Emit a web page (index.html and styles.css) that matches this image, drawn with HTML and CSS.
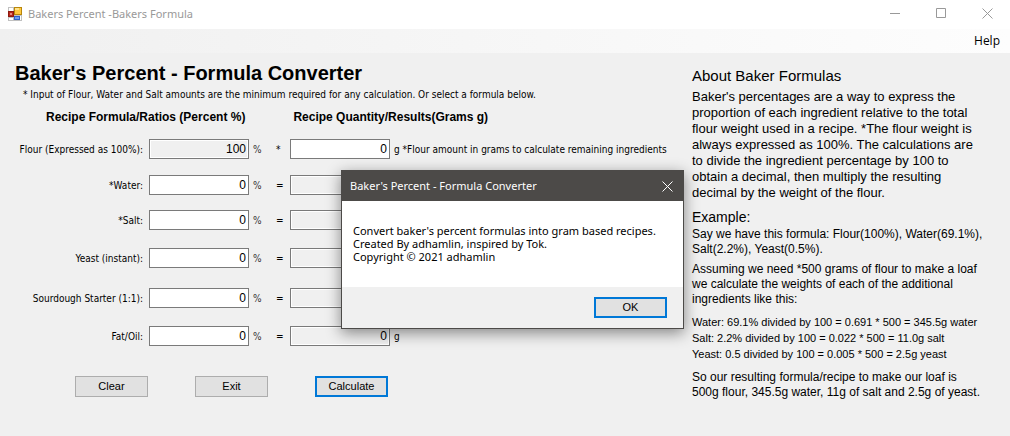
FILE: index.html
```html
<!DOCTYPE html>
<html lang="en">
<head>
<meta charset="utf-8">
<title>Bakers Percent -Bakers Formula</title>
<link rel="stylesheet" href="styles.css">
</head>
<body>
<header class="titlebar">
  <svg class="app-icon" width="14" height="14" viewBox="0 0 14 14" aria-hidden="true">
    <path d="M0 0h14v14H0z" fill="#c0c0c0"/>
    <path d="M1 1h4v3H1zM1 11h4v2H1zM12 9h1v4h-1z" fill="#fff"/>
    <path d="M6 0h8v8H6z" fill="#b8860b"/>
    <path d="M7 1h6v6H7z" fill="#ffc83c"/>
    <path d="M7 1h4v2H7z" fill="#ffe38a"/>
    <path d="M0 4h6v6H0z" fill="#8e1a10"/>
    <path d="M1 5h4v4H1z" fill="#b8291b"/>
    <path d="M2 6h2v2H2z" fill="#e88a80"/>
    <path d="M6 9h6v4H6z" fill="#2f62c8"/>
    <path d="M7 10h4v2H7z" fill="#6f9cf0"/>
  </svg>
  <span class="titlebar-text">Bakers Percent -Bakers Formula</span>
  <div class="window-buttons">
    <button type="button" aria-label="Minimize"><svg width="11" height="11" viewBox="0 0 11 11"><path d="M0 5.500h10" /></svg></button>
    <button type="button" aria-label="Maximize"><svg width="11" height="11" viewBox="0 0 11 11"><path d="M.5.5h9v9h-9z" /></svg></button>
    <button type="button" aria-label="Close"><svg width="11" height="11" viewBox="0 0 11 11"><path d="M.5.5l10 10M10.500.5l-10 10" /></svg></button>
  </div>
</header>
<nav class="menu"><button type="button">Help</button></nav>
<main class="content">
  <form class="converter">
    <h1>Baker's Percent - Formula Converter</h1>
    <p class="note">* Input of Flour, Water and Salt amounts are the minimum required for any calculation. Or select a formula below.</p>
    <div class="column-heads">
      <h2>Recipe Formula/Ratios (Percent %)</h2>
      <h2>Recipe Quantity/Results(Grams g)</h2>
    </div>
    <div class="rows">
      <label for="flour">Flour (Expressed as 100%):</label>
      <input id="flour" value="100" readonly>
      <span class="units"><span>%</span><span class="op">*</span></span>
      <input id="flour-g" value="0" aria-label="Flour grams">
      <span class="grams">g *Flour amount in grams to calculate remaining ingredients</span>

      <label for="water">*Water:</label>
      <input id="water" value="0">
      <span class="units"><span>%</span><span class="op">=</span></span>
      <input id="water-g" aria-label="Water grams" readonly>
      <span class="grams"></span>

      <label for="salt">*Salt:</label>
      <input id="salt" value="0">
      <span class="units"><span>%</span><span class="op">=</span></span>
      <input id="salt-g" aria-label="Salt grams" readonly>
      <span class="grams"></span>

      <label for="yeast">Yeast (instant):</label>
      <input id="yeast" value="0">
      <span class="units"><span>%</span><span class="op">=</span></span>
      <input id="yeast-g" aria-label="Yeast grams" readonly>
      <span class="grams"></span>

      <label for="starter">Sourdough Starter (1:1):</label>
      <input id="starter" value="0">
      <span class="units"><span>%</span><span class="op">=</span></span>
      <input id="starter-g" aria-label="Sourdough starter grams" readonly>
      <span class="grams"></span>

      <label for="fat">Fat/Oil:</label>
      <input id="fat" value="0">
      <span class="units"><span>%</span><span class="op">=</span></span>
      <input id="fat-g" value="0" aria-label="Fat or oil grams" readonly>
      <span class="grams">g</span>
    </div>
    <div class="actions">
      <button class="push" type="button">Clear</button>
      <button class="push" type="button">Exit</button>
      <button class="push push-default" type="button">Calculate</button>
    </div>
  </form>
  <aside class="about">
    <h2>About Baker Formulas</h2>
    <p class="intro">Baker's percentages are a way to express the<br>proportion of each ingredient relative to the total<br>flour weight used in a recipe. *The flour weight is<br>always expressed as 100%. The calculations are<br>to divide the ingredient percentage by 100 to<br>obtain a decimal, then multiply the resulting<br>decimal by the weight of the flour.</p>
    <h3>Example:</h3>
    <p>Say we have this formula: Flour(100%), Water(69.1%),<br>Salt(2.2%), Yeast(0.5%).</p>
    <p>Assuming we need *500 grams of flour to make a loaf<br>we calculate the weights of each of the additional<br>ingredients like this:</p>
    <p class="sums">Water: 69.1% divided by 100 = 0.691 * 500 = 345.5g water<br>Salt: 2.2% divided by 100 = 0.022 * 500 = 11.0g salt<br>Yeast: 0.5 divided by 100 = 0.005 * 500 = 2.5g yeast</p>
    <p>So our resulting formula/recipe to make our loaf is<br>500g flour, 345.5g water, 11g of salt and 2.5g of yeast.</p>
  </aside>
</main>
<section class="dialog" role="dialog" aria-labelledby="dialog-title">
  <header class="dialog-title">
    <span id="dialog-title">Baker's Percent - Formula Converter</span>
    <button type="button" aria-label="Close"><svg width="11" height="11" viewBox="0 0 11 11"><path d="M.5.5l10 10M10.500.5l-10 10" /></svg></button>
  </header>
  <p class="dialog-text">Convert baker's percent formulas into gram based recipes.<br>Created By adhamlin, inspired by Tok.<br>Copyright © 2021 adhamlin</p>
  <footer class="dialog-footer"><button class="push push-default" type="button">OK</button></footer>
</section>
</body>
</html>
```
FILE: styles.css
```css
* { box-sizing: border-box; }

body {
  margin: 0;
  min-height: 100vh;
  background: #f0f0f0;
  color: #000;
  font: 10px/20px "DejaVu Sans Condensed", "Liberation Sans", sans-serif;
}

h1, h2, h3, p { margin: 0; }

button, input { font: inherit; color: inherit; }

button svg { display: block; fill: none; stroke: currentColor; }

/* Window chrome */
.titlebar {
  display: flex;
  align-items: center;
  height: 29px;
  padding: 0 0 2px 8px;
  background: #fff;
  color: #999;
  font: 11px/27px "Noto Sans", "Segoe UI", sans-serif;
}

.app-icon { margin-right: 6px; }

.window-buttons {
  display: flex;
  margin-left: auto;
}

.window-buttons button {
  display: grid;
  place-items: center;
  width: 46px;
  height: 27px;
  padding: 0;
  border: 0;
  background: none;
}

.menu {
  display: flex;
  justify-content: flex-end;
  height: 24px;
  padding: 0 6px;
  background: linear-gradient(to right, #f0f0f0, #fdfdfd);
}

.menu button {
  padding: 0 4px;
  border: 0;
  background: none;
  font: 12px/24px "Open Sans", "Segoe UI", sans-serif;
}

/* Form */
.content {
  display: flex;
  align-items: flex-start;
}

.converter {
  flex: 1;
  min-width: 0;
  padding: 8px 0 0 15px;
  white-space: nowrap;
}

.converter h1 {
  font: bold 20px/24px "Liberation Sans", Arial, sans-serif;
}

.note {
  padding-left: 8px;
  line-height: 20px;
}

.column-heads {
  display: flex;
  gap: 48px;
  padding-left: 31px;
}

.column-heads h2 {
  font: bold 12px/24px "Liberation Sans", Arial, sans-serif;
}

.rows {
  display: grid;
  grid-template-columns: 134px 100px 41px 100px 1fr;
  grid-template-rows: 36px 35px 38px 40px 38px 20px;
  align-items: start;
  padding-top: 10px;
}

.rows label {
  padding: 1px 6px 0 0;
  text-align: right;
}

.rows input {
  width: 100%;
  height: 20px;
  padding: 0 2px;
  border: 1px solid #7a7a7a;
  background: #fff;
  font: 12px "Liberation Sans", Arial, sans-serif;
  text-align: right;
  outline: 0;
}

.rows input[readonly] {
  background: #f0f0f0;
  box-shadow: inset 0 0 0 1px #fff;
}

.units {
  display: flex;
  justify-content: space-between;
  padding: 1px 0 0 4px;
}

.units span { color: #333; }

.units .op { width: 14px; color: #000; }

.grams { padding: 1px 0 0 4px; }

.actions {
  display: flex;
  gap: 47px;
  padding: 30px 0 0 60px;
}

.push {
  width: 73px;
  height: 21px;
  padding: 0;
  border: 1px solid #adadad;
  background: #e1e1e1;
  font: 11px/17px "Liberation Sans", Arial, sans-serif;
  text-align: center;
}

.push-default { border: 2px solid #0078d7; }

/* Explanation */
.about {
  flex: none;
  width: 318px;
  padding-top: 13px;
  font: 12px/15px "Liberation Sans", Arial, sans-serif;
  white-space: nowrap;
}

.about h2, .about h3 {
  font-size: 15px;
  font-weight: 400;
  line-height: 20px;
}

.about h3 { font-size: 14px; }

.about p { margin-bottom: 5px; }

.about .intro {
  margin: 3px 0 6px;
  font-size: 13px;
  line-height: 16px;
}

.about .sums {
  margin: 7px 0 8px;
  font: 11px/16px "Liberation Sans", Arial, sans-serif;
}

/* Message box */
.dialog {
  position: absolute;
  top: 170px;
  left: 341px;
  width: 343px;
  border: 1px solid #4c4a48;
  background: #fff;
  box-shadow: 0 4px 14px rgba(0, 0, 0, .45);
}

.dialog-title {
  display: flex;
  align-items: center;
  justify-content: space-between;
  height: 30px;
  padding: 0 10px 0 8px;
  background: #4c4a48;
  color: #fff;
  font: 11px/28px "Noto Sans", "Segoe UI", sans-serif;
}

.dialog-title button {
  padding: 0;
  border: 0;
  background: none;
}

.dialog-text {
  padding: 23px 11px 24px;
  font: 11px/13px "Noto Sans", Tahoma, sans-serif;
}

.dialog-footer {
  display: flex;
  justify-content: flex-end;
  padding: 10px 16px;
  background: #f0f0f0;
}
```
